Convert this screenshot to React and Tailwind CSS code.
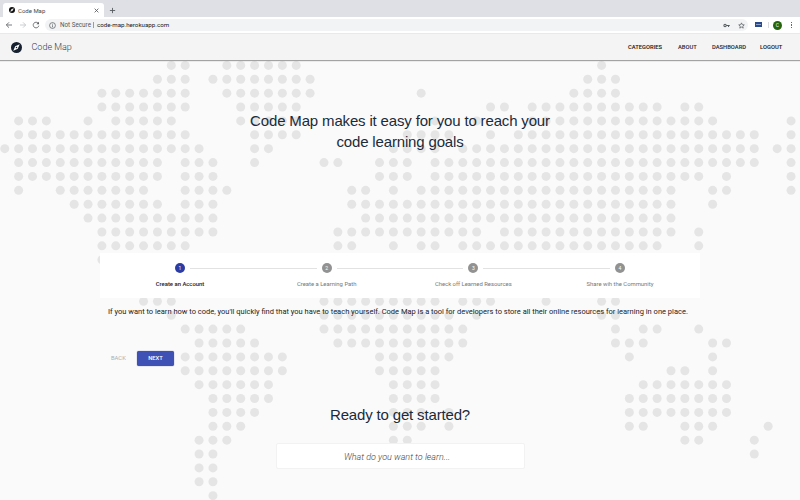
import React from "react";

const SP = 13.88;
const ROWS = [
  [[12, 13], [16, 21], [43, 43]],
  [[11, 13], [15, 22], [42, 44]],
  [[7, 13], [16, 22], [30, 30], [41, 44]],
  [[7, 13], [17, 21], [35, 36], [38, 47], [49, 50]],
  [[1, 3], [6, 6], [8, 12], [17, 21], [31, 31], [34, 34], [38, 51], [56.65, 56.65]],
  [[1, 13], [18, 21], [29, 32], [35, 35], [37, 54], [56.65, 56.65]],
  [[0, 14], [18, 19], [28, 31], [33, 54], [55.65, 56.65]],
  [[1, 11], [13, 15], [18, 18], [23, 24], [27, 29], [31, 54], [56.65, 56.65]],
  [[1, 11], [13, 15], [27, 29], [31, 50], [52, 52], [56.65, 56.65]],
  [[1, 1], [4, 10], [13, 16], [25, 26], [28, 28], [30, 48], [51, 52], [56.65, 56.65]],
  [[5, 11], [13, 15], [25, 48], [51, 51]],
  [[6, 15], [26, 48]],
  [[7, 15], [24, 34], [36, 48], [50, 50]],
  [[7, 13], [24, 25], [28, 28], [30, 31], [33, 47], [50, 50]],
  [[7, 7]],
  [],
  [],
  [[10, 12], [23, 31], [33, 35], [39, 39], [43, 44]],
  [[12, 12], [23, 32], [34, 34], [43, 44]],
  [[13, 17], [23, 33], [44, 44], [46, 47], [50, 50]],
  [[14, 18], [24, 33], [44, 46], [51, 52]],
  [[13, 20], [27, 32], [45, 45], [51, 51]],
  [[13, 20], [27, 31], [48, 49], [51, 51]],
  [[14, 19], [28, 31], [46, 52]],
  [[15, 19], [28, 31], [45, 52]],
  [[15, 18], [28, 30], [32, 32], [45, 52]],
  [[15, 17], [28, 30], [32, 32], [45, 46], [49, 51], [55, 55]],
  [[14, 16], [28, 29], [49, 50], [54, 54]],
  [[14, 15], [54, 54]],
  [[14, 15]],
  [[14, 15]],
  [[15, 15]],
];

function DotMap() {
  const dots = [];
  ROWS.forEach((runs, r) =>
    runs.forEach(([a, b]) => {
      for (let c = a; c <= b + 0.01; c++) {
        dots.push(<circle key={`${r}-${c}`} cx={4.75 + c * SP} cy={65.4 + r * SP} r="4.5" />);
      }
    })
  );
  return (
    <svg className="absolute inset-0 -z-10" width="800" height="500" viewBox="0 0 800 500" fill="#e5e5e5" aria-hidden="true">
      {dots}
    </svg>
  );
}

function Compass({ size, color }) {
  return (
    <svg width={size} height={size} viewBox="0 0 24 24" className="shrink-0">
      <circle cx="12" cy="12" r="12" fill={color} />
      <path d="M19 5 14.8 14.8 5 19 9.2 9.2Z" fill="#fff" />
      <circle cx="12" cy="12" r="1.6" fill={color} />
    </svg>
  );
}

function Icon({ size = 8, className = "", children }) {
  return (
    <svg width={size} height={size} viewBox="0 0 24 24" fill="none" stroke="currentColor" strokeWidth="2.4" className={`shrink-0 ${className}`}>
      {children}
    </svg>
  );
}

function BrowserChrome() {
  return (
    <div className="h-[33px] shrink-0 bg-white">
      <div className="flex h-[17px] items-end bg-[#dee0e5] pl-[3px]">
        <div className="flex h-[14px] w-[101px] items-center rounded-t-[3px] bg-white pr-[5px] pl-[6px] text-[6px] text-[#45484c]">
          <Compass size={6} color="#111" />
          <span className="ml-[3px] flex-1">Code Map</span>
          <Icon size={5} className="text-[#55585c]"><path d="M3 3 21 21M21 3 3 21" strokeWidth="4" /></Icon>
        </div>
        <Icon size={7} className="mb-[3px] ml-[5px] text-[#55585c]"><path d="M12 3v18M3 12h18" strokeWidth="3" /></Icon>
      </div>
      <div className="flex h-4 items-center pr-[5px] pl-[5px] text-[#55585c]">
        <Icon size={8}><path d="M21 12H4M12 4l-8 8 8 8" /></Icon>
        <Icon size={8} className="ml-[6px] text-[#c0c2c5]"><path d="M3 12h17M12 4l8 8-8 8" /></Icon>
        <Icon size={8} className="ml-[5px]"><path d="M19 7a8.500 8.500 0 1 0 1.500 7" /><path d="M21 2v8h-8z" fill="currentColor" stroke="none" /></Icon>
        <div className="ml-[5px] flex h-3 w-[703px] items-center rounded-full bg-[#f1f3f4] pr-[3px] pl-[4px] text-[6.300px]">
          <Icon size={7}><circle cx="12" cy="12" r="10" /><path d="M12 11v7M12 6v3" /></Icon>
          <span className="ml-[4px] w-[31px] pt-px whitespace-nowrap">Not Secure</span>
          <span className="ml-[2px] h-[6px] w-px bg-[#9a9da0]" />
          <span className="ml-[3px] flex-1 pt-px text-[6.200px] text-[#202124]">code-map.herokuapp.com</span>
          <Icon size={7} className="mr-[8px]"><circle cx="7" cy="12" r="4" strokeWidth="3.500" /><path d="M11 12h12M19 12v5" strokeWidth="3.500" /></Icon>
          <Icon size={7}><path d="m12 3 2.700 6.200 6.800.6-5.100 4.500 1.500 6.700-5.900-3.500L6.100 21l1.500-6.700L2.500 9.800l6.800-.6z" /></Icon>
        </div>
        <span className="mb-[2px] ml-[7px] flex h-[5px] w-[7px] items-center justify-center bg-[#2b4a8c]">
          <span className="h-px w-[5px] bg-[#8fa2cc]" />
        </span>
        <span className="ml-[6px] h-[6px] w-px bg-[#d8dadd]" />
        <span className="ml-[4px] flex size-[9px] items-center justify-center rounded-full bg-[#24640f] text-[5px] leading-none text-white">C</span>
        <span className="ml-[9px] flex flex-col gap-px">
          <i className="size-[1.400px] bg-[#66696d]" />
          <i className="size-[1.400px] bg-[#66696d]" />
          <i className="size-[1.400px] bg-[#66696d]" />
        </span>
      </div>
    </div>
  );
}

function Header() {
  return (
    <header className="flex h-[27px] shrink-0 items-center border-t border-[#e9e9e9] bg-[#f4f4f4] pr-[17px] pl-[11px] shadow-[0_1px_1px_rgba(0,0,0,0.35)]">
      <Compass size={11} color="#16202e" />
      <span className="ml-[9.500px] flex-1 pt-px text-[9px] font-light text-[#2d3b49]">Code Map</span>
      <nav className="flex text-[5.800px] font-medium text-[#1b2733]">
        <span className="w-[50px] text-[#111]">CATEGORIES</span>
        <span className="w-[34px]">ABOUT</span>
        <span className="w-[48px]">DASHBOARD</span>
        <span className="w-[23px] text-[#111]">LOGOUT</span>
      </nav>
    </header>
  );
}

const STEPS = ["Create an Account", "Create a Learning Path", "Check off Learned Resources", "Share wih the Community"];

function Stepper() {
  return (
    <div className="mx-auto grid h-[45px] w-[600px] grid-cols-4 bg-white px-[6.670px] pt-[10px]">
      {STEPS.map((label, i) => (
        <div key={label} className="flex flex-col items-center">
          <div className="flex h-[10px] w-full items-center gap-[5px]">
            <span className={`h-px flex-1 ${i > 0 ? "bg-[#e2e2e2]" : ""}`} />
            <span className={`flex size-[10px] items-center justify-center rounded-full text-[5px] leading-none text-white ${i === 0 ? "bg-[#2c3ca5]" : "bg-[#929292]"}`}>{i + 1}</span>
            <span className={`h-px flex-1 ${i < 3 ? "bg-[#e2e2e2]" : ""}`} />
          </div>
          <span className={`mt-[7px] text-[5.900px] leading-[8px] whitespace-nowrap ${i === 0 ? "font-medium text-[#222]" : "text-[#777]"}`}>{label}</span>
        </div>
      ))}
    </div>
  );
}

export default function App() {
  return (
    <div className="relative isolate flex h-[500px] w-[800px] flex-col overflow-hidden bg-[#fafafa] font-[Roboto,sans-serif]">
      <DotMap />
      <BrowserChrome />
      <Header />
      <main className="flex flex-1 flex-col pt-[51px]">
        <h1 className="text-center font-['Liberation_Sans',sans-serif] text-[15px] leading-[20.500px] tracking-[-0.16px] text-[#1b2b3a]">
          Code Map makes it easy for you to reach your
          <br />
          code learning goals
        </h1>
        <div className="mt-[101px]">
          <Stepper />
        </div>
        <p className="mt-[8px] pl-[108px] text-[7.500px] leading-[12px] whitespace-nowrap text-[#222]">
          If you want to learn how to code, you'll quickly find that you have to teach yourself. Code Map is a tool for developers to store all their online resources for learning in one place.
        </p>
        <div className="mt-[32px] flex h-4 items-center pl-[111px] text-[5.800px]">
          <span className="w-[26px] text-[#adadad]">BACK</span>
          <button className="h-[15px] w-[37px] rounded-[2px] bg-[#3f51b5] font-medium text-white shadow-[0_0_1px_#2c3ca5]">NEXT</button>
        </div>
        <h2 className="mt-[39px] text-center font-['Liberation_Sans',sans-serif] text-[15px] leading-[20px] tracking-[-0.16px] text-[#1b2b3a]">Ready to get started?</h2>
        <div className="mx-auto mt-[18px] flex h-[26px] w-[249px] items-center justify-center rounded-[2px] border border-[#f2f2f2] bg-white pt-[3px] pr-[6px] text-[9px] font-light text-[#444] italic">
          What do you want to learn...
        </div>
      </main>
    </div>
  );
}
